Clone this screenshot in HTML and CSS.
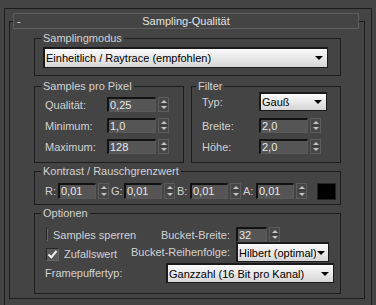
FILE: index.html
```html
<!DOCTYPE html>
<html lang="de">
<head>
  <meta charset="UTF-8" />
  <title>Sampling-Qualität</title>
  <link rel="stylesheet" href="styles.css">
</head>
<body>
  <div class="rollout">
    <div class="rollout-head">
      <span class="toggle">-</span>
      <span class="rollout-title">Sampling-Qualität</span>
      <span></span>
    </div>

    <div class="rollout-body">
      <div class="group">
        <div class="group-title">Samplingmodus</div>
        <div class="dropdown dd-mode"><span class="dd-text">Einheitlich / Raytrace (empfohlen)</span><i class="caret"></i></div>
      </div>

      <div class="pair">
        <div class="group group-samples">
          <div class="group-title">Samples pro Pixel</div>
          <div class="row first">
            <span class="lbl lbl-samples">Qualität:</span>
            <span class="field">0,25</span><span class="spin"></span>
          </div>
          <div class="row">
            <span class="lbl lbl-samples">Minimum:</span>
            <span class="field">1,0</span><span class="spin"></span>
          </div>
          <div class="row">
            <span class="lbl lbl-samples">Maximum:</span>
            <span class="field">128</span><span class="spin"></span>
          </div>
        </div>

        <div class="group group-filter">
          <div class="group-title">Filter</div>
          <div class="row row-type">
            <span class="lbl lbl-filter">Typ:</span>
            <div class="dropdown dd-type"><span class="dd-text">Gauß</span><i class="caret"></i></div>
          </div>
          <div class="row">
            <span class="lbl lbl-filter">Breite:</span>
            <span class="field">2,0</span><span class="spin"></span>
          </div>
          <div class="row">
            <span class="lbl lbl-filter">Höhe:</span>
            <span class="field">2,0</span><span class="spin"></span>
          </div>
        </div>
      </div>

      <div class="group group-contrast">
        <div class="group-title">Kontrast / Rauschgrenzwert</div>
        <div class="row row-rgba">
          <span class="lbl lbl-ch">R:</span><span class="field field-ch">0,01</span><span class="spin spin-ch"></span>
          <span class="lbl lbl-ch">G:</span><span class="field field-ch">0,01</span><span class="spin spin-ch"></span>
          <span class="lbl lbl-ch">B:</span><span class="field field-ch">0,01</span><span class="spin spin-ch"></span>
          <span class="lbl lbl-ch">A:</span><span class="field field-ch">0,01</span><span class="spin spin-ch"></span>
          <span class="swatch"></span>
        </div>
      </div>

      <div class="group group-options">
        <div class="group-title">Optionen</div>
        <div class="opt-row opt-a">
          <div class="opt-left"><span class="check"></span>Samples sperren</div>
          <span class="opt-lbl">Bucket-Breite:</span>
          <span class="field field-bucket">32</span><span class="spin"></span>
        </div>
        <div class="opt-row opt-b">
          <div class="opt-left shifted"><span class="check checked"></span>Zufallswert</div>
          <span class="opt-lbl">Bucket-Reihenfolge:</span>
          <div class="dropdown dd-order"><span class="dd-text">Hilbert (optimal)</span><i class="caret"></i></div>
        </div>
        <div class="opt-row opt-c">
          <span class="opt-frame">Framepuffertyp:</span>
          <div class="dropdown dd-frame"><span class="dd-text">Ganzzahl (16 Bit pro Kanal)</span><i class="caret"></i></div>
        </div>
      </div>
    </div>
  </div>
</body>
</html>
```

FILE: styles.css
```css
:root {
  --bg: #444444;
  --line: #1c1c1c;
  --text: #d2d2d2;
  --field-bg: #555555;
  --field-text: #e8e8e8;
}

* {
  box-sizing: border-box;
}

body {
  margin: 0;
  background: var(--bg);
  color: var(--text);
  font-family: "Liberation Sans", Arial, sans-serif;
  font-size: 11px;
}

/* rollout frame */
.rollout {
  margin: 8px 0 0 4px;
  width: 368px;
  border: 1px solid var(--line);
  padding: 4px 0 8px 0;
}

.rollout-head {
  position: relative;
  z-index: 1;
  margin-left: 8px;
  width: 346px;
  height: 16px;
  border: 1px solid #5e5e5e;
  background: var(--bg);
  display: grid;
  grid-template-columns: 1fr auto 1fr;
  align-items: center;
  line-height: 14px;
  color: #e2e2e2;
}

.toggle {
  padding-left: 3px;
}

.rollout-body {
  margin: -8px 0 0 4px;
  width: 356px;
  border: 1px solid var(--line);
  padding: 16px 23px 4px 24px;
}

/* group boxes */
.group {
  border: 1px solid var(--line);
  padding-bottom: 7px;
}

.group-title {
  width: fit-content;
  height: 13px;
  line-height: 13px;
  margin: -7px 0 0 6px;
  padding: 0 2px;
  background: var(--bg);
}

.group-filter .group-title {
  margin-left: 4px;
}

.pair {
  display: flex;
  gap: 7px;
  margin-top: 10px;
}

.pair .group {
  flex: 1;
  padding-bottom: 5px;
}

.group-contrast {
  margin-top: 8px;
  padding-bottom: 3px;
}

.group-options {
  margin-top: 8px;
  padding-bottom: 10px;
}

/* rows */
.row {
  display: flex;
  align-items: center;
  height: 21px;
  padding-left: 10px;
}

.row.first {
  margin-top: 1px;
}

.row-type {
  margin: -2px 0 3px;
}

.row-rgba {
  height: 20px;
  margin-top: 3px;
}

.lbl-samples {
  width: 62px;
}

.lbl-filter {
  width: 57px;
}

.lbl-ch {
  width: 13px;
}

/* spinner fields */
.field {
  width: 49px;
  height: 15px;
  line-height: 12px;
  background: var(--field-bg);
  color: var(--field-text);
  border-top: 2px solid #121212;
  border-left: 2px solid #121212;
  border-right: 1px solid #5a5a5a;
  border-bottom: 1px solid #5a5a5a;
  padding-left: 1px;
}

.field-ch {
  width: 38px;
  height: 16px;
  line-height: 13px;
}

.field-bucket {
  width: 31px;
}

.spin {
  width: 11px;
  height: 15px;
  margin-left: 2px;
  border: 1px solid #5c5c5c;
  background: linear-gradient(#474747 0 6px, #3a3a3a 6px 7px, #474747 7px);
  display: flex;
  flex-direction: column;
  justify-content: space-around;
  align-items: center;
}

.spin::before {
  content: "";
  border-left: 3px solid transparent;
  border-right: 3px solid transparent;
  border-bottom: 3px solid #c4c4c4;
}

.spin::after {
  content: "";
  border-left: 3px solid transparent;
  border-right: 3px solid transparent;
  border-top: 3px solid #c4c4c4;
}

.spin-ch {
  height: 16px;
  margin-right: 2px;
}

.swatch {
  width: 19px;
  height: 17px;
  margin-left: 8px;
  background: #000;
  border: 1px solid #222;
}

/* dropdowns */
.dropdown {
  display: flex;
  align-items: center;
  background: linear-gradient(#fbfbfb, #d6d6d6);
  color: #000;
  border: 1px solid #1a1a1a;
  border-top-width: 2px;
  border-left-width: 2px;
  padding: 0 4px 0 1px;
}

.dd-text {
  flex: 1;
  white-space: nowrap;
  overflow: hidden;
}

.caret {
  border-left: 4px solid transparent;
  border-right: 4px solid transparent;
  border-top: 4px solid #000;
  margin-left: 4px;
}

.dd-mode {
  height: 21px;
  margin: 2px 12px 0 8px;
}

.dd-type {
  width: 68px;
  height: 19px;
}

.dd-order {
  width: 93px;
  height: 20px;
  padding-right: 3px;
}

.dd-order .caret {
  margin-left: 1px;
}

.dd-frame {
  width: 168px;
  height: 20px;
}

/* options */
.opt-row {
  display: flex;
  align-items: center;
  padding-left: 10px;
}

.opt-a {
  height: 15px;
  margin-top: 7px;
}

.opt-b {
  height: 20px;
}

.opt-c {
  height: 20px;
  margin-top: 1px;
}

.opt-left {
  width: 86px;
  display: flex;
  align-items: center;
  white-space: nowrap;
}

.opt-left.shifted {
  margin-top: 4px;
}

.opt-lbl {
  width: 99px;
  margin-right: 6px;
  text-align: right;
  white-space: nowrap;
}

.opt-frame {
  width: 121px;
}

.check {
  width: 13px;
  height: 13px;
  margin: 0 5px 0 1px;
  background: #585858;
  border-top: 1px solid #262626;
  border-left: 1px solid #262626;
  border-right: 1px solid #666;
  border-bottom: 1px solid #666;
  position: relative;
}

.checked::after {
  content: "";
  position: absolute;
  left: 3px;
  top: 0;
  width: 3px;
  height: 7px;
  border-right: 2px solid #f0f0f0;
  border-bottom: 2px solid #f0f0f0;
  transform: rotate(40deg);
}
```
